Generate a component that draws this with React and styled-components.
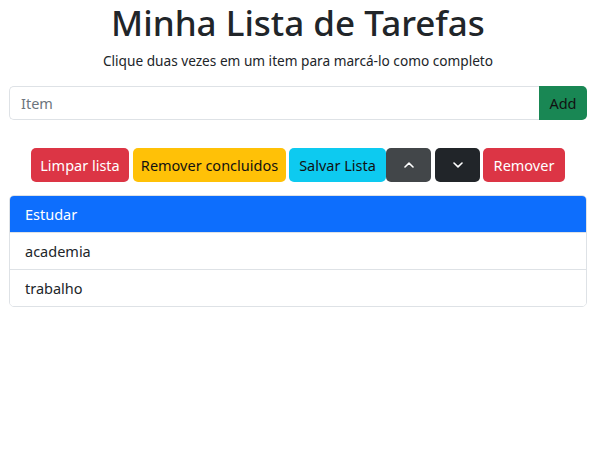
import React, { useState } from 'react';
import styled, { createGlobalStyle } from 'styled-components';

const Global = createGlobalStyle`
  body {
    margin: 0;
    background: #fff;
    font-family: "Noto Sans", "Open Sans", sans-serif;
    color: #212529;
  }
`;

const Wrap = styled.div`
  padding: 2px 9px 0;
`;

const Title = styled.h1`
  margin: 0;
  font-size: 35px;
  line-height: 41px;
  font-weight: 500;
  text-align: center;
  color: #212529;
`;

const Sub = styled.p`
  margin: 7px 0 0;
  font-size: 13.65px;
  line-height: 22px;
  text-align: center;
`;

const InputGroup = styled.div`
  display: flex;
  margin-top: 14px;
  height: 34px;
`;

const Field = styled.input`
  flex: 1;
  min-width: 0;
  box-sizing: border-box;
  height: 34px;
  padding: 0 11px;
  border: 1px solid #dee2e6;
  border-right: 0;
  border-radius: 5px 0 0 5px;
  font: inherit;
  font-size: 14.5px;
  color: #212529;
  outline: none;
  &::placeholder {
    color: #6c757d;
  }
`;

const AddBtn = styled.button`
  width: 48px;
  height: 34px;
  border: 0;
  border-radius: 0 5px 5px 0;
  background: #198754;
  color: #111;
  font: inherit;
  font-size: 14.5px;
  padding: 0;
`;

const Toolbar = styled.div`
  display: flex;
  justify-content: center;
  margin-top: 28px;
`;

const colors = {
  danger: ['#dc3545', '#fff'],
  warning: ['#ffc107', '#111'],
  info: ['#0dcaf0', '#111'],
  darkHover: ['#424649', '#fff'],
  dark: ['#212529', '#fff'],
};

const Btn = styled.button`
  width: ${p => p.$w}px;
  margin-left: ${p => p.$gap || 0}px;
  height: 34px;
  border: 0;
  border-radius: 5px;
  padding: 0;
  background: ${p => colors[p.$v][0]};
  color: ${p => colors[p.$v][1]};
  font: inherit;
  font-size: 14.5px;
  display: flex;
  align-items: center;
  justify-content: center;
  white-space: nowrap;
`;

const List = styled.ul`
  list-style: none;
  margin: 13px 0 0;
  padding: 0;
  border: 1px solid #dee2e6;
  border-radius: 5px;
  overflow: hidden;
`;

const Item = styled.li`
  padding: 7px 15px;
  font-size: 14.5px;
  line-height: 22px;
  background: ${p => (p.$active ? '#0d6efd' : '#fff')};
  color: ${p => (p.$active ? '#fff' : '#212529')};
  & + & {
    border-top: 1px solid #dee2e6;
  }
`;

const Chevron = ({ up }) => (
  <svg width="10" height="6" viewBox="0 0 10 6" fill="none">
    <polyline
      points={up ? '1,5 5,1.2 9,5' : '1,1 5,4.8 9,1'}
      stroke="#fff"
      strokeWidth="1.6"
      strokeLinecap="round"
      strokeLinejoin="round"
    />
  </svg>
);

const App = () => {
  const [items] = useState(['Estudar', 'academia', 'trabalho']);
  const [selected] = useState(0);

  return (
    <>
      <Global />
      <Wrap>
        <Title>Minha Lista de Tarefas</Title>
        <Sub>Clique duas vezes em um item para marcá-lo como completo</Sub>
        <InputGroup>
          <Field placeholder="Item" />
          <AddBtn>Add</AddBtn>
        </InputGroup>
        <Toolbar>
          <Btn $v="danger" $w={98}>Limpar lista</Btn>
          <Btn $v="warning" $w={153} $gap={4}>Remover concluidos</Btn>
          <Btn $v="info" $w={97} $gap={3}>Salvar Lista</Btn>
          <Btn $v="darkHover" $w={45}><Chevron up /></Btn>
          <Btn $v="dark" $w={45} $gap={4}><Chevron /></Btn>
          <Btn $v="danger" $w={82} $gap={3}>Remover</Btn>
        </Toolbar>
        <List>
          {items.map((item, i) => (
            <Item key={i} $active={i === selected}>{item}</Item>
          ))}
        </List>
      </Wrap>
    </>
  );
};

export default App;
